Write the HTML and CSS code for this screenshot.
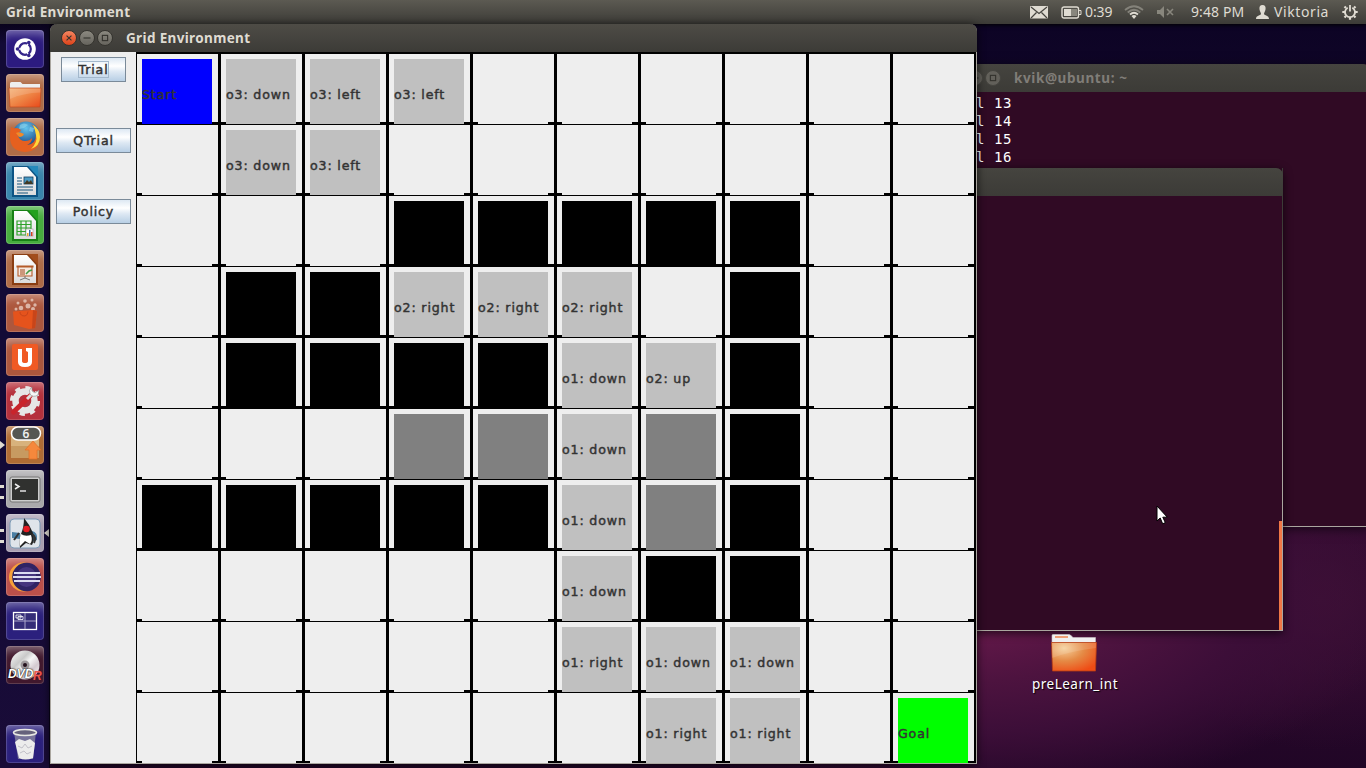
FILE: index.html
```html
<!DOCTYPE html>
<html lang="en">
<head>
<meta charset="utf-8">
<title>Grid Environment</title>
<link rel="stylesheet" href="styles.css">
</head>
<body>
<svg width="0" height="0" class="defs" aria-hidden="true">
  <defs>
    <linearGradient id="folder" x1="0" y1="0" x2="1" y2="1"><stop offset="0" stop-color="#f4b377"/><stop offset=".5" stop-color="#ee8445"/><stop offset="1" stop-color="#e8491a"/></linearGradient>
    <radialGradient id="glow" cx=".28" cy=".2" r=".9"><stop offset="0" stop-color="#f5d09b"/><stop offset=".5" stop-color="#e58a45"/><stop offset="1" stop-color="#ef4c15"/></radialGradient>
    <radialGradient id="globe" cx=".5" cy=".25" r=".7"><stop offset="0" stop-color="#62c4ee"/><stop offset="1" stop-color="#123d80"/></radialGradient>
    <linearGradient id="disc" x1="0" y1="0" x2="1" y2="1"><stop offset="0" stop-color="#fff"/><stop offset=".35" stop-color="#c9c9c9"/><stop offset=".5" stop-color="#f6f6f6"/><stop offset=".7" stop-color="#d4c9d0"/><stop offset="1" stop-color="#fff"/></linearGradient>
    <linearGradient id="page" x1="0" y1="0" x2="0" y2="1"><stop offset="0" stop-color="#fff"/><stop offset="1" stop-color="#dcdcdc"/></linearGradient>
  </defs>
</svg>
<div class="desktop">
  <header class="panel">
    <span class="panel-title">Grid Environment</span>
    <div class="indicators">
      <svg class="mail" width="18" height="13" viewBox="0 0 18 13"><rect width="18" height="12.5" rx="1" fill="#dfdbd2"/><path d="M1 1l8 6.5L17 1M1 12l5.5-5.5M17 12l-5.500-5.500" fill="none" stroke="#45443f" stroke-width="1.2"/></svg>
      <svg class="battery" width="21" height="13" viewBox="0 0 21 13"><rect x="1" y="1" width="16.500" height="11" rx="2" fill="none" stroke="#dfdbd2" stroke-width="1.400"/><rect x="3" y="3" width="7" height="7" fill="#dfdbd2"/><rect x="10" y="3" width="6" height="7" fill="#88867d"/><path d="M18 4.500h2v4h-2" fill="none" stroke="#dfdbd2"/></svg>
      <span class="charge">0:39</span>
      <svg class="wifi" width="20" height="14" viewBox="0 0 20 14" fill="none" stroke-width="1.700"><path d="M1 5Q10-2.500 19 5M3.700 7.500Q10 2 16.300 7.500" stroke="#84827a"/><path d="M6 9.500Q10 6 14 9.500" stroke="#dfdbd2"/><path d="M7.500 11L10 14l2.500-3Q10 9 7.500 11z" fill="#dfdbd2" stroke="none"/></svg>
      <svg class="sound" width="18" height="14" viewBox="0 0 18 14"><path d="M1 5h3l4-4v12L4 9H1z" fill="#88867d"/><path d="M11 4l6 6M17 4l-6 6" stroke="#88867d" stroke-width="1.600"/></svg>
      <span class="clock">9:48 PM</span>
      <svg class="user" width="13" height="14" viewBox="0 0 13 14"><path d="M6.500 0C9 0 10 2 9.500 4.500 9.200 6.500 8 7.500 8 9c.5 1.500 5 1.300 5 5H0c0-3.700 4.500-3.500 5-5 0-1.500-1.200-2.500-1.500-4.500C3 2 4 0 6.500 0z" fill="#dfdbd2"/></svg>
      <span class="name">Viktoria</span>
      <svg class="gear" width="16" height="16" viewBox="0 0 16 16" fill="none" stroke="#dfdbd2"><path d="M5.700 3.700A5 5 0 1 0 10.300 3.700" stroke-width="1.800"/><path d="M8 1v6.500" stroke-width="1.800"/><path d="M4 4L2.500 2.500M12 4l1.500-1.500M3 8H.3M13 8h2.700M4 12l-1.500 1.500M12 12l1.500 1.500M8 13v2.700" stroke-width="2.200"/></svg>
    </div>
  </header>

  <section class="win term term-back">
    <div class="titlebar"><i class="wbtn dim"><svg viewBox="0 0 16 16"><path d="M4 8h8"/></svg></i><i class="wbtn dim"><svg viewBox="0 0 16 16"><rect x="5" y="5" width="6" height="6"/></svg></i><span>kvik@ubuntu: ~</span></div>
    <pre class="out">l 13
l 14
l 15
l 16</pre>
  </section>
  <section class="win term term-front"><div class="titlebar"></div><i class="scroll"></i></section>

  <div class="desk-icon">
    <svg width="46" height="38" viewBox="0 0 46 38"><path d="M1 12V1.500Q1 .5 2 .5h16q1.500 0 2.500 1.500l1.500 1.500h22.500V12z" fill="#f0f0f0" stroke="#c9c4c4" stroke-width=".6"/><rect x="4" y="2" width="13" height="2" fill="#ee9f76"/><path d="M.5 8.500h45L44.500 37h-43z" fill="url(#glow)" stroke="#b83c13" stroke-width=".8"/><path d="M1 9h44v5Q20 17 1 24z" fill="#fff" opacity=".13"/></svg>
    <span>preLearn_int</span>
  </div>

  <nav class="launcher">
    <div class="tile t-dash"><svg viewBox="0 0 38 38"><circle cx="19" cy="19" r="10.800" fill="#fff"/><circle cx="19" cy="19" r="5.800" fill="none" stroke="#34258a" stroke-width="2.200"/><path d="M19 19L9.500 19M19 19l5-8.500M19 19l5 8.500" stroke="#fff" stroke-width="1.300"/><circle cx="19" cy="19" r="3.800" fill="#fff"/><g fill="#34258a"><circle cx="11.500" cy="19" r="1.800"/><circle cx="22.800" cy="12.500" r="1.800"/><circle cx="22.800" cy="25.500" r="1.800"/></g></svg></div>
    <div class="tile t-tan"><svg viewBox="0 0 38 38"><path d="M4 18V9.500Q4 8 5.500 8h9l2 2H34v8z" fill="#eee"/><path d="M3 14h32l-1 19H4z" fill="url(#folder)" stroke="#c34b20" stroke-width=".7"/><path d="M3.500 14.500h31v4Q17 19 4 25z" fill="#fff" opacity=".15"/></svg></div>
    <div class="tile t-tan"><svg viewBox="0 0 38 38"><circle cx="20" cy="17" r="13.500" fill="url(#globe)"/><path d="M14 7q4-3 8 0l-4 3-5 1zM24 9l4 1-1 4-4-1z" fill="#8ed6ef" opacity=".6"/><path d="M5 9Q7 11 10 10q4 0 5 3-4 2-3 5 2 5 7 5 5 0 7-3 0 5-5 7 9-1 9-10 0-7-5-11 8 4 9 13 0 14-15 15Q4 33 4 19 4 12 5 9z" fill="#e6601f"/><path d="M27 7q7 4 7 12 0 9-9 12 7-7 5-14-1-6-3-10z" fill="#ffd83b"/><path d="M10 15q3-2 8 1-1 3-5 3z" fill="#f28a28"/></svg></div>
    <div class="tile t-blue"><svg viewBox="0 0 38 38"><path d="M6 4h19l7 8v23H6z" fill="#0d5484"/><path d="M8 5h13l9 10v18H8z" fill="url(#page)"/><path d="M22 4h10v11z" fill="#2489bb"/><path d="M11 16h5M11 19h5M11 22h5M11 25h16M11 28h16M11 31h11" stroke="#19567f" stroke-width="1.200"/><rect x="18" y="15" width="9" height="7" fill="#4a9ac4" stroke="#123c5d" stroke-width=".8"/><path d="M18 22l3-4 2 2 2-2 2 4z" fill="#423a25"/></svg></div>
    <div class="tile t-green"><svg viewBox="0 0 38 38"><path d="M6 4h19l7 8v23H6z" fill="#188016"/><path d="M8 5h13l9 10v18H8z" fill="url(#page)"/><path d="M22 4h10v11z" fill="#23a11d"/><path d="M11 15h14v14H11zM15 15v14M20 15v14M11 18.500h14M11 22h14M11 25.500h14" fill="none" stroke="#2fa22a" stroke-width="1.200"/><rect x="20" y="23" width="7" height="7" fill="#fff" stroke="#888" stroke-width=".5"/><path d="M21 27h1.500v3H21z" fill="#e9a227"/><path d="M23 24h1.500v6H23z" fill="#386ba5"/><path d="M25 26h1.500v4H25z" fill="#d84221"/></svg></div>
    <div class="tile t-tan"><svg viewBox="0 0 38 38"><path d="M6 4h19l7 8v23H6z" fill="#8a3e13"/><path d="M8 5h13l9 10v18H8z" fill="url(#page)"/><path d="M22 4h10v11z" fill="#a24d1c"/><path d="M11 16h16v1H11zM12 17h14v9H12z" fill="#f7e9df" stroke="#b55b28" stroke-width="1.100"/><path d="M14 20h5M14 22h5M14 24h5" stroke="#a04418"/><path d="M20 24l3-3 3-1" stroke="#3f9a45" stroke-width="1.500" fill="none"/><path d="M19 26v2l-5 2M19 28l5 2" stroke="#777" fill="none"/></svg></div>
    <div class="tile t-rust"><svg viewBox="0 0 38 38"><g fill="#e5c5b8" opacity=".85"><circle cx="12" cy="9" r="1.500"/><circle cx="19" cy="7" r="1.800"/><circle cx="26" cy="6" r="1.500"/><circle cx="29" cy="11" r="1.700"/><circle cx="15" cy="14" r="2.300"/><circle cx="22" cy="12" r="2.500"/><circle cx="10" cy="15" r="1.500"/><circle cx="27" cy="15" r="2"/></g><path d="M7 17.500l20-1.500 4 1-2 17-6 1-15-4z" fill="#e5531c"/><path d="M27 16l4 1-2 17-3 .5z" fill="#c8451a"/><path d="M14 18q0 4 5 4 3-1 3-4.500" fill="none" stroke="#c8441a"/></svg></div>
    <div class="tile t-rust"><svg viewBox="0 0 38 38"><rect x="6" y="6" width="26" height="26" rx="2" fill="#f05a24"/><path d="M12 11h4v12q0 2 3 2t3-2v-9l-2-1v-3h6v14q0 5-7 5t-7-5z" fill="#fff"/></svg></div>
    <div class="tile t-red"><svg viewBox="0 0 38 38"><circle cx="19" cy="19" r="9.500" fill="none" stroke="#e6e6e6" stroke-width="6.500"/><circle cx="19" cy="19" r="13.300" fill="none" stroke="#e6e6e6" stroke-width="3.500" stroke-dasharray="5.200 5.240"/><path d="M7.500 30L24 14" stroke="#c9242b" stroke-width="5" stroke-linecap="round"/><path d="M21 17l6-6" stroke="#ddd" stroke-width="3"/><path d="M26 5q-4 3-2 7 3 4 8 1l1-5-4 3-3-2z" fill="#f7f7f7" stroke="#888" stroke-width=".6"/></svg></div>
    <div class="tile t-box left-one"><svg viewBox="0 0 38 38"><path d="M5 7h28v25H5z" fill="#d8b27c"/><path d="M5 20h28v12H5z" fill="#c79a61"/><path d="M27 15l8 9h-4v9h-8v-9h-4z" fill="#f5883c" stroke="#e27027" stroke-width=".7"/><rect x="5.500" y="1" width="29" height="13" rx="6.500" fill="#555753" stroke="#fff" stroke-width="1.500"/></svg><em>6</em></div>
    <div class="tile t-gray left-two"><svg viewBox="0 0 38 38"><rect x="4" y="7" width="30" height="25" rx="2" fill="#ccc" stroke="#777"/><rect x="6" y="9" width="26" height="21" fill="#30312f"/><path d="M9 14l4 2.500L9 19" fill="none" stroke="#eee" stroke-width="1.500"/><path d="M14 21h6" stroke="#eee" stroke-width="1.400"/></svg></div>
    <div class="tile t-duke left-two right-one"><svg viewBox="0 0 38 38"><rect x="4" y="5" width="30" height="29" rx="4" fill="#dfe4ea" stroke="#7d9ab5"/><path d="M6 18l8 1v6l-8-1zM26 17q6 1 5 9l-5 2z" fill="#4b7fa3"/><path d="M18 4q6 7 9 15 2 7-1 12l-6-2-6 5q-1-9 1-14 3-7 3-16z" fill="#222"/><path d="M15 20q4 3 10 1 2 6-1 9l-5-3-5 5q-1-7 1-12z" fill="#fff"/><path d="M13 19l-5 7M26 20q5 3 2 9" fill="none" stroke="#333" stroke-width="2"/><circle cx="20.500" cy="15" r="3.300" fill="#e61b23"/></svg></div>
    <div class="tile t-eclipse"><svg viewBox="0 0 38 38"><circle cx="17.500" cy="19" r="14.500" fill="#f7a13a"/><circle cx="20.500" cy="19" r="14.300" fill="#2f2364"/><circle cx="20.500" cy="19" r="10" fill="#45347e"/><path d="M8 15h26M7 19h28M8 23h26" stroke="#dcdcf0" stroke-width="1.900"/></svg></div>
    <div class="tile t-indigo"><svg viewBox="0 0 38 38"><rect x="7.500" y="10.500" width="23" height="17" fill="#352d78" stroke="#fff" stroke-width="1.300"/><path d="M19 11v16M8 19h22" stroke="#aaa5ca"/><path d="M10 13h5v3h-5zM12 14.500h5v3h-5z" fill="#352d78" stroke="#fff" stroke-width=".8"/></svg></div>
    <div class="tile t-dvd"><svg viewBox="0 0 38 38"><circle cx="19" cy="19" r="14.500" fill="url(#disc)"/><circle cx="19" cy="19" r="4.500" fill="#9d989b"/><circle cx="19" cy="19" r="2" fill="#24121e"/></svg><em class="dvd">DVD</em><em class="dvdr">R</em></div>
    <div class="tile t-indigo trash"><svg viewBox="0 0 38 38"><path d="M8 7h22l-3 27H12z" fill="#77739a"/><path d="M9 17l4-3 6 2 5-2 5 4-2 15q-8 3-14 0z" fill="#ececec"/><path d="M12 21l4 2 3-4 3 4 4-2M14 28l4-2 3 3 4-2" stroke="#c2c1c9" fill="none"/><ellipse cx="19" cy="7.500" rx="11.500" ry="3" fill="#66627c" stroke="#e8e8e3" stroke-width="1.600"/></svg></div>
  </nav>

  <section class="win app">
    <div class="titlebar"><i class="wbtn close"><svg viewBox="0 0 16 16"><path d="M5.200 5.200l5.600 5.600M10.800 5.200l-5.600 5.600"/></svg></i><i class="wbtn"><svg viewBox="0 0 16 16"><path d="M4 8h8"/></svg></i><i class="wbtn"><svg viewBox="0 0 16 16"><rect x="5" y="5" width="6" height="6"/></svg></i><span>Grid Environment</span></div>
    <div class="content">
      <aside class="controls">
        <button class="narrow"><span>Trial</span></button><button>QTrial</button><button>Policy</button>
      </aside>
      <main class="grid">
        <b class="start">Start</b><b class="o">o3: down</b><b class="o">o3: left</b><b class="o">o3: left</b><b></b><b></b><b></b><b></b><b></b><b></b>
        <b></b><b class="o">o3: down</b><b class="o">o3: left</b><b></b><b></b><b></b><b></b><b></b><b></b><b></b>
        <b></b><b></b><b></b><b class="w"></b><b class="w"></b><b class="w"></b><b class="w"></b><b class="w"></b><b></b><b></b>
        <b></b><b class="w"></b><b class="w"></b><b class="o">o2: right</b><b class="o">o2: right</b><b class="o">o2: right</b><b></b><b class="w"></b><b></b><b></b>
        <b></b><b class="w"></b><b class="w"></b><b class="w"></b><b class="w"></b><b class="o">o1: down</b><b class="o">o2: up</b><b class="w"></b><b></b><b></b>
        <b></b><b></b><b></b><b class="d"></b><b class="d"></b><b class="o">o1: down</b><b class="d"></b><b class="w"></b><b></b><b></b>
        <b class="w"></b><b class="w"></b><b class="w"></b><b class="w"></b><b class="w"></b><b class="o">o1: down</b><b class="d"></b><b class="w"></b><b></b><b></b>
        <b></b><b></b><b></b><b></b><b></b><b class="o">o1: down</b><b class="w"></b><b class="w"></b><b></b><b></b>
        <b></b><b></b><b></b><b></b><b></b><b class="o">o1: right</b><b class="o">o1: down</b><b class="o">o1: down</b><b></b><b></b>
        <b></b><b></b><b></b><b></b><b></b><b></b><b class="o">o1: right</b><b class="o">o1: right</b><b></b><b class="goal">Goal</b>
      </main>
    </div>
  </section>

  <svg class="cursor" width="12" height="20" viewBox="0 0 12 20"><path d="M1 1v15l3.200-3 2.500 5.800 2.600-1.200-2.500-5.400h4.500z" fill="#fff" stroke="#000"/></svg>
</div>
</body>
</html>
```
FILE: styles.css
```css
* { box-sizing: border-box; }
body { margin: 0; overflow: hidden; font-family: "Noto Sans", "Open Sans", sans-serif; }
.defs { position: absolute; }
svg { display: block; flex: none; }

.desktop {
  position: relative;
  width: 1366px;
  height: 768px;
  overflow: hidden;
  background:
    linear-gradient(#0c0324, #100628) 0 0 / 100% 100px no-repeat,
    radial-gradient(ellipse 440px 190px at 960px 610px, #6c1a4d 0%, #4d133f 38%, #3c0e38 65%, rgba(50, 10, 48, 0) 100%),
    radial-gradient(ellipse 170px 150px at 1320px 600px, #3c1034, rgba(50, 10, 48, 0)),
    linear-gradient(#29092f, #310932 70%, #210626);
}

/* Top panel */
.panel {
  display: flex;
  justify-content: space-between;
  align-items: center;
  height: 24px;
  padding: 0 8px 0 6px;
  background: linear-gradient(#5c5a52, #3c3b37);
  color: #dfdbd2;
  box-shadow: 0 1px 4px #000;
}
.panel-title { font: bold 13.5px/24px "Noto Sans", sans-serif; letter-spacing: 0.35px; }
.indicators { display: flex; align-items: center; font-size: 14px; line-height: 24px; white-space: nowrap; }
.battery { margin-left: 13px; }
.charge { width: 28px; margin-left: 3px; letter-spacing: -0.1px; }
.wifi { margin-left: 11px; }
.sound { margin-left: 12px; }
.clock { width: 54px; margin-left: 17px; letter-spacing: 0.1px; }
.user { margin-left: 11px; }
.name { width: 56px; margin-left: 5px; letter-spacing: 0.6px; }
.gear { margin-left: 12px; }

/* Windows */
.win { position: absolute; }
.titlebar {
  display: flex;
  align-items: center;
  height: 28px;
  border-radius: 7px 7px 0 0;
  background: linear-gradient(#4e4c46, #3c3b37);
  color: #dfdbd2;
  font: bold 13.5px/28px "Noto Sans", sans-serif;
  letter-spacing: 0.35px;
}
.wbtn { width: 16px; height: 16px; margin-right: 2px; border: 1px solid #35342f; border-radius: 50%; background: linear-gradient(#8b8980, #66645d); }
.wbtn svg { width: 14px; height: 14px; fill: none; stroke: #34332e; stroke-width: 1.3; }
.wbtn.close { background: linear-gradient(#f58560, #dc431a); }
.wbtn.dim { border-color: #45443f; background: #62605a; }

.term { background: #300a24; }
.term .titlebar { background: linear-gradient(#45443f, #3c3b37); color: #807d78; }
.term-back { left: 940px; top: 64px; width: 430px; height: 463px; border-bottom: 1px solid #aaa69f; box-shadow: 0 2px 10px #0009; }
.term-back .titlebar { padding-left: 27px; letter-spacing: 0.6px; }
.term-back .titlebar span { margin-left: 11px; }
.out { margin: 2px 0 0 36px; color: #fff; font: 14px/18px "DejaVu Sans Mono", monospace; letter-spacing: 0.57px; }
.term-front { left: 940px; top: 168px; width: 343px; height: 463px; border: solid #aaa69f; border-width: 0 1px 1px 0; border-image: linear-gradient(#3c3b37 12%, #aaa69f 55%) 1; border-radius: 0 7px 0 0; box-shadow: 0 2px 10px #000a; }
.term-front .titlebar { margin-right: -1px; }
.scroll { position: absolute; right: 0; bottom: 0; width: 3px; height: 109px; background: #f07746; }

.desk-icon { position: absolute; left: 1015px; top: 634px; width: 120px; display: flex; flex-direction: column; align-items: center; color: #fff; font-size: 13.5px; line-height: 24px; letter-spacing: 0.5px; text-shadow: 1px 1px 1px #000; }
.desk-icon svg { margin-left: -3px; }

/* Launcher */
.launcher {
  position: absolute;
  left: 0;
  top: 24px;
  width: 50px;
  height: 744px;
  display: flex;
  flex-direction: column;
  gap: 6px;
  padding: 6px 0 5px 6px;
  background: linear-gradient(#09031c, #130a36 20px, #130a36 500px, #1a0c38);
  border-right: 1px solid #08041a;
}
.tile { position: relative; width: 38px; height: 38px; flex: none; border-radius: 4px; box-shadow: inset 0 0 0 1px #ffffff28, inset 0 9px 9px -5px #ffffff60; }
.tile svg { width: 38px; height: 38px; }
.trash { margin-top: auto; }
.t-dash { background: #2c1b80; }
.t-tan { background: #b06c47; }
.t-blue { background: #3985ad; }
.t-green { background: #47ad3e; }
.t-rust { background: #ad573d; }
.t-red { background: #b5303c; }
.t-box { background: #b06c34; }
.t-gray { background: #aaa9ac; }
.t-duke { background: #a9a0b2; }
.t-eclipse { background: #bc504a; }
.t-indigo { background: #2b207d; }
.t-dvd { background: #41182d; }
.tile em { position: absolute; font-style: normal; }
.t-box em { left: 0; top: 1px; width: 40px; text-align: center; color: #eee; font-size: 12px; font-weight: 600; line-height: 13px; }
.tile .dvd { left: 2px; top: 22px; color: #fff; font: italic bold 12px/13px "Liberation Sans", sans-serif; text-shadow: 0 0 1px #000, 0 0 2px #000; }
.tile .dvdr { left: 27px; top: 24px; color: #ee554a; font: italic bold 12px/13px "Liberation Sans", sans-serif; }
.left-one::before, .right-one::after { content: ""; position: absolute; top: 15px; border: solid transparent; border-width: 4px 0 4px 5px; border-left-color: #dfdbd2; left: -6px; }
.right-one::after { left: auto; right: -5px; border-width: 4px 5px 4px 0; border-right-color: #dfdbd2; }
.left-two::before { content: ""; position: absolute; left: -6px; top: 15px; width: 4px; height: 8px; border: solid #dfdbd2; border-width: 3px 0; }

/* Application window */
.app { left: 50px; top: 24px; width: 927px; height: 740px; border: solid #aaa69f; border-width: 0 1px 1px; border-radius: 7px 7px 0 0; box-shadow: 0 1px 9px #000b; }
.app .titlebar { margin: 0 -1px; padding-left: 11px; }
.app .titlebar span { margin-left: 11px; }
.content { display: grid; grid-template-columns: 85px 840px; height: 711px; background: #eee; }
.controls { display: grid; grid-template-rows: repeat(10, 71px); justify-items: center; align-items: start; padding-top: 5px; }
.controls button, .grid b {
  color: #333;
  font: 12.6px/17px "DejaVu Sans", sans-serif;
  letter-spacing: 0.85px;
  -webkit-text-stroke: 0.45px #333;
}
.controls button {
  width: 75px;
  height: 25px;
  padding: 0;
  border: 1px solid #7a8a99;
  background: linear-gradient(#dde8f3, #fff 35%, #dde8f3 60%, #b8cfe5);
}
.controls .narrow { width: 65px; }
.narrow span { display: inline-block; height: 17px; line-height: 15px; border: 1px solid #a3b8cc; }

.grid { display: grid; grid-template-columns: repeat(10, 84px); grid-auto-rows: 71px; border-top: 1px solid #000; }
.grid b {
  --fill: #eee;
  padding-left: 6px;
  background:
    linear-gradient(var(--fill) 0 0) 6px 6px / 70px 65px no-repeat,
    linear-gradient(#000 0 0) 0 0 / 1px 100% no-repeat,
    linear-gradient(#000 0 0) 100% 0 / 2px 100% no-repeat,
    linear-gradient(#000 0 0) 0 0 / 100% 1px no-repeat,
    linear-gradient(#000 0 0) 0 100% / 100% 2px no-repeat,
    #eee;
  line-height: 83px;
  white-space: nowrap;
}
.grid .o { --fill: silver; }
.grid .d { --fill: gray; }
.grid .w { --fill: #000; }
.grid .start { --fill: #00f; }
.grid .goal { --fill: #0f0; }

.cursor { position: absolute; left: 1156px; top: 505px; }
```
